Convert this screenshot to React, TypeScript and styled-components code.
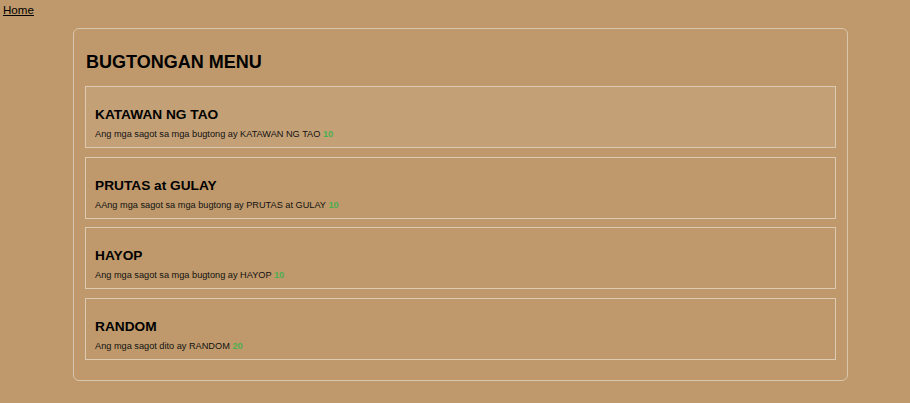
import React from "react";
import styled, { createGlobalStyle } from "styled-components";

const Global = createGlobalStyle`
  html, body { margin: 0; padding: 0; }
  body {
    background: #bf996b;
    font-family: "Liberation Sans", Arial, sans-serif;
    color: #000;
    height: 403px;
  }
`;

const Nav = styled.nav`
  height: 17px;
  padding: 3px 0 0 3px;
  box-sizing: border-box;
`;

const HomeLink = styled.a`
  display: block;
  width: max-content;
  font-size: 11.6px;
  line-height: 14px;
  color: #000;
  text-decoration: underline;
`;

const Panel = styled.div`
  box-sizing: border-box;
  width: 775px;
  margin: 11px 0 0 73px;
  padding: 23px 11px 20px 11px;
  border: 1px solid #d8c7af;
  border-radius: 6px;
`;

const Title = styled.h1`
  margin: 0 0 13px 1px;
  font-size: 18px;
  line-height: 21px;
  font-weight: bold;
`;

const List = styled.div`
  display: flex;
  flex-direction: column;
  gap: 8.65px;
`;

const Card = styled.a<{ $active?: boolean }>`
  display: block;
  box-sizing: border-box;
  height: 62px;
  padding: 20px 9px 0 9px;
  border: 1px solid #dccab3;
  background: ${(p) => (p.$active ? "#c4a077" : "transparent")};
  color: #000;
  text-decoration: none;
`;

const CardTitle = styled.h3`
  margin: 0 0 6px 0;
  font-size: 13.7px;
  line-height: 16px;
  font-weight: bold;
`;

const CardText = styled.p`
  margin: 0;
  font-size: 9.2px;
  line-height: 11px;
  color: #111;
`;

const Count = styled.span`
  color: #4caf50;
  font-weight: bold;
`;

const items = [
  { title: "KATAWAN NG TAO", text: "Ang mga sagot sa mga bugtong ay KATAWAN NG TAO", n: 10 },
  { title: "PRUTAS at GULAY", text: "AAng mga sagot sa mga bugtong ay PRUTAS at GULAY", n: 10 },
  { title: "HAYOP", text: "Ang mga sagot sa mga bugtong ay HAYOP", n: 10 },
  { title: "RANDOM", text: "Ang mga sagot dito ay RANDOM", n: 20 },
];

export default function App() {
  return (
    <>
      <Global />
      <Nav>
        <HomeLink href="#">Home</HomeLink>
      </Nav>
      <Panel>
        <Title>BUGTONGAN MENU</Title>
        <List>
          {items.map((it, i) => (
            <Card key={it.title} href="#" $active={i === 0}>
              <CardTitle>{it.title}</CardTitle>
              <CardText>
                {it.text} <Count>{it.n}</Count>
              </CardText>
            </Card>
          ))}
        </List>
      </Panel>
    </>
  );
}
